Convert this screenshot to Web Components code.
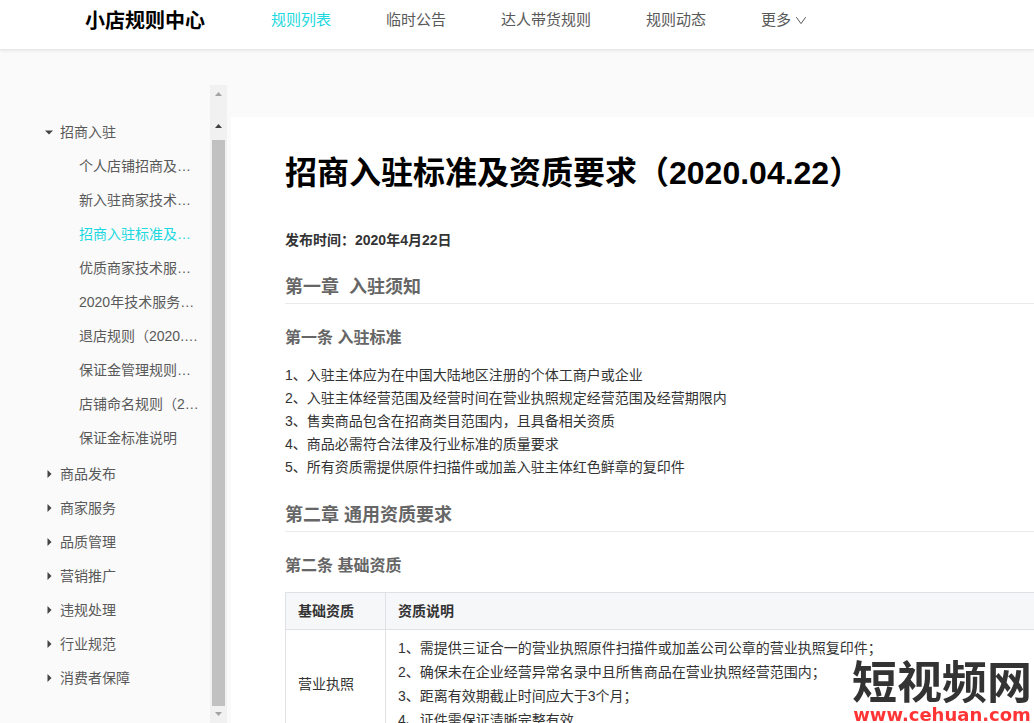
<!DOCTYPE html>
<html lang="zh-CN">
<head>
<meta charset="utf-8">
<meta name="viewport" content="width=device-width, initial-scale=1">
<title>小店规则中心</title>
<style>
    body {
        margin: 0;
        height: 100vh;
        overflow: hidden;
        background: #fafafa;
        color: #333;
        font: 14px/24px "Liberation Sans", "Noto Sans CJK SC", sans-serif;
        --accent: #1cd8e0;
        --muted: #595959;
        --line: #dfe1e4;
    }
</style>
</head>
<body>
<rule-app>
    <top-bar slot="header" heading="小店规则中心">
        <top-link active>规则列表</top-link>
        <top-link>临时公告</top-link>
        <top-link>达人带货规则</top-link>
        <top-link>规则动态</top-link>
        <top-link more>更多</top-link>
    </top-bar>

    <side-menu slot="side">
        <menu-group label="招商入驻" open>
            <menu-item>个人店铺招商及…</menu-item>
            <menu-item>新入驻商家技术…</menu-item>
            <menu-item active>招商入驻标准及…</menu-item>
            <menu-item>优质商家技术服…</menu-item>
            <menu-item>2020年技术服务…</menu-item>
            <menu-item>退店规则（2020.…</menu-item>
            <menu-item>保证金管理规则…</menu-item>
            <menu-item>店铺命名规则（2…</menu-item>
            <menu-item>保证金标准说明</menu-item>
        </menu-group>
        <menu-group label="商品发布"></menu-group>
        <menu-group label="商家服务"></menu-group>
        <menu-group label="品质管理"></menu-group>
        <menu-group label="营销推广"></menu-group>
        <menu-group label="违规处理"></menu-group>
        <menu-group label="行业规范"></menu-group>
        <menu-group label="消费者保障"></menu-group>
    </side-menu>
    <scroll-rail slot="side"></scroll-rail>

    <rule-article heading="招商入驻标准及资质要求（2020.04.22）" published="发布时间：2020年4月22日">
        <rule-chapter heading="第一章&nbsp; 入驻须知">
            <rule-section heading="第一条 入驻标准">
                <rule-line>1、入驻主体应为在中国大陆地区注册的个体工商户或企业</rule-line>
                <rule-line>2、入驻主体经营范围及经营时间在营业执照规定经营范围及经营期限内</rule-line>
                <rule-line>3、售卖商品包含在招商类目范围内，且具备相关资质</rule-line>
                <rule-line>4、商品必需符合法律及行业标准的质量要求</rule-line>
                <rule-line>5、所有资质需提供原件扫描件或加盖入驻主体红色鲜章的复印件</rule-line>
            </rule-section>
        </rule-chapter>
        <rule-chapter heading="第二章 通用资质要求">
            <rule-section heading="第二条 基础资质">
                <license-table></license-table>
            </rule-section>
        </rule-chapter>
    </rule-article>

    <site-mark slot="mark"></site-mark>
</rule-app>

<script>
/**
 * Shared base: clones the markup of the subclass into an open shadow root.
 */
class BaseElement extends HTMLElement {
    constructor() {
        super();

        const template = document.createElement("template");
        template.innerHTML = this.constructor.markup;

        this.attachShadow({mode: "open"});
        this.shadowRoot.appendChild(template.content.cloneNode(true));
    }

    /**
     * Copies an attribute of the host into a node of the shadow root.
     *
     * @param {String} selector the node that receives the text
     * @param {String} name the name of the attribute
     */
    fill(selector, name) {
        this.shadowRoot.querySelector(selector).textContent =
            this.getAttribute(name) || "";
    }
}

class RuleApp extends BaseElement {
    static get markup() {
        return `
            <style>
                :host {
                    display: flex;
                    flex-direction: column;
                    height: 100vh;
                }

                .body {
                    flex: 1;
                    display: flex;
                    min-height: 0;
                }

                aside {
                    display: flex;
                    flex: none;
                    margin-right: 4px;
                }

                main {
                    flex: 1;
                    min-width: 0;
                    margin-top: 67px;
                    background: #fff;
                    overflow: hidden;
                }
            </style>
            <slot name="header"></slot>
            <div class="body">
                <aside><slot name="side"></slot></aside>
                <main><slot></slot></main>
            </div>
            <slot name="mark"></slot>
        `;
    }
}

class TopBar extends BaseElement {
    static get markup() {
        return `
            <style>
                :host {
                    display: block;
                    position: relative;
                    background: #fff;
                    border-bottom: 1px solid #e8e8e8;
                    box-shadow: 0 1px 3px rgba(0, 0, 0, .08);
                }

                header {
                    display: flex;
                    align-items: flex-start;
                    gap: 66px;
                    padding: 0 85px 7px;
                    line-height: 40px;
                    white-space: nowrap;
                }

                strong {
                    color: #000;
                    font-size: 20px;
                    line-height: 42px;
                }

                nav {
                    display: flex;
                    gap: 55px;
                }
            </style>
            <header>
                <strong></strong>
                <nav><slot></slot></nav>
            </header>
        `;
    }

    connectedCallback() {
        this.fill("strong", "heading");
    }
}

class TopLink extends BaseElement {
    static get markup() {
        return `
            <style>
                :host {
                    display: block;
                    color: var(--muted);
                    font-size: 15px;
                }

                :host([active]) {
                    color: var(--accent);
                }

                a {
                    display: flex;
                    align-items: center;
                    gap: 4px;
                    color: inherit;
                    text-decoration: none;
                }

                svg {
                    display: none;
                }

                :host([more]) svg {
                    display: block;
                }
            </style>
            <a href="#">
                <slot></slot>
                <svg width="12" height="12" viewBox="0 0 12 12" fill="none" stroke="currentColor" aria-hidden="true">
                    <path d="M1.300 3.200 6 9.600l4.700-6.400"/>
                </svg>
            </a>
        `;
    }
}

class SideMenu extends BaseElement {
    static get markup() {
        return `
            <style>
                :host {
                    display: block;
                    box-sizing: border-box;
                    width: 210px;
                    padding: 65px 0 0 45px;
                    color: var(--muted);
                    line-height: 34px;
                }
            </style>
            <nav><slot></slot></nav>
        `;
    }
}

class MenuGroup extends BaseElement {
    static get markup() {
        return `
            <style>
                :host {
                    display: block;
                }

                button {
                    display: flex;
                    align-items: center;
                    gap: 7px;
                    width: 100%;
                    padding: 0;
                    border: 0;
                    background: none;
                    color: inherit;
                    font: inherit;
                    cursor: pointer;
                }

                :host([open]) svg {
                    transform: rotate(90deg);
                }

                .items {
                    display: none;
                    padding: 0 0 2px 34px;
                }

                :host([open]) .items {
                    display: block;
                }
            </style>
            <button type="button">
                <svg width="8" height="8" viewBox="0 0 8 8" fill="#444" aria-hidden="true">
                    <path d="M2.500 0 6.500 4l-4 4z"/>
                </svg>
                <span></span>
            </button>
            <div class="items"><slot></slot></div>
        `;
    }

    connectedCallback() {
        this.fill("span", "label");
        this.shadowRoot.querySelector("button").addEventListener("click", () => {
            this.toggleAttribute("open");
        });
    }
}

class MenuItem extends BaseElement {
    static get markup() {
        return `
            <style>
                :host {
                    display: block;
                }

                :host([active]) {
                    color: var(--accent);
                }

                a {
                    display: block;
                    color: inherit;
                    text-decoration: none;
                    white-space: nowrap;
                }
            </style>
            <a href="#"><slot></slot></a>
        `;
    }
}

class ScrollRail extends BaseElement {
    static get markup() {
        return `
            <style>
                :host {
                    display: flex;
                    flex-direction: column;
                    align-items: center;
                    box-sizing: border-box;
                    width: 17px;
                    margin-top: 35px;
                    padding: 7px 0;
                    background: #f1f1f1;
                }

                svg {
                    flex: none;
                    fill: #a3a3a3;
                }

                .step {
                    margin: 28px 0 12px;
                    fill: #404040;
                }

                .thumb {
                    flex: 1;
                    width: 13px;
                    margin-bottom: 6px;
                    background: #c1c1c1;
                }
            </style>
            <svg width="7" height="4" viewBox="0 0 7 4"><path d="M0 4 3.500 0 7 4z"/></svg>
            <svg class="step" width="7" height="4" viewBox="0 0 7 4"><path d="M0 4 3.500 0 7 4z"/></svg>
            <div class="thumb"></div>
            <svg width="7" height="4" viewBox="0 0 7 4"><path d="M0 0h7L3.500 4z"/></svg>
        `;
    }
}

class RuleArticle extends BaseElement {
    static get markup() {
        return `
            <style>
                :host {
                    display: block;
                    padding: 32px 0 0 54px;
                }

                h1 {
                    margin: 0 0 31px;
                    color: #000;
                    font-size: 32px;
                    line-height: 48px;
                }

                p {
                    margin: 0 0 20px;
                    font-weight: bold;
                }
            </style>
            <article>
                <h1></h1>
                <p></p>
                <slot></slot>
            </article>
        `;
    }

    connectedCallback() {
        this.fill("h1", "heading");
        this.fill("p", "published");
    }
}

class RuleChapter extends BaseElement {
    static get markup() {
        return `
            <style>
                :host {
                    display: block;
                    margin-bottom: 21px;
                }

                h2 {
                    margin: 0 0 21px;
                    padding-bottom: 1px;
                    border-bottom: 1px solid #eaeaea;
                    color: #666;
                    font-size: 18px;
                    line-height: 30px;
                }
            </style>
            <h2></h2>
            <slot></slot>
        `;
    }

    connectedCallback() {
        this.fill("h2", "heading");
    }
}

class RuleSection extends BaseElement {
    static get markup() {
        return `
            <style>
                :host {
                    display: block;
                }

                h3 {
                    margin: 0 0 13px;
                    color: #666;
                    font-size: 16px;
                    line-height: 26px;
                }
            </style>
            <h3></h3>
            <slot></slot>
        `;
    }

    connectedCallback() {
        this.fill("h3", "heading");
    }
}

class RuleLine extends BaseElement {
    static get markup() {
        return `
            <style>
                :host {
                    display: block;
                    line-height: 23px;
                }
            </style>
            <slot></slot>
        `;
    }
}

class LicenseTable extends BaseElement {
    static get markup() {
        return `
            <style>
                :host {
                    display: block;
                }

                table {
                    width: 100%;
                    border-collapse: collapse;
                }

                th, td {
                    padding: 6px 12px;
                    border: 1px solid var(--line);
                    text-align: left;
                }

                th:first-child {
                    width: 75px;
                }

                th:last-child, td:last-child {
                    border-right: 0;
                }

                thead {
                    background: #f6f7f9;
                }

                p {
                    margin: 0;
                }
            </style>
            <table>
                <thead>
                    <tr><th>基础资质</th><th>资质说明</th></tr>
                </thead>
                <tbody>
                    <tr>
                        <td>营业执照</td>
                        <td>
                            <p>1、需提供三证合一的营业执照原件扫描件或加盖公司公章的营业执照复印件；</p>
                            <p>2、确保未在企业经营异常名录中且所售商品在营业执照经营范围内；</p>
                            <p>3、距离有效期截止时间应大于3个月；</p>
                            <p>4、证件需保证清晰完整有效</p>
                        </td>
                    </tr>
                </tbody>
            </table>
        `;
    }
}

class SiteMark extends BaseElement {
    static get markup() {
        return `
            <style>
                :host {
                    position: fixed;
                    right: 2px;
                    bottom: 0;
                    display: flex;
                    flex-direction: column;
                    align-items: center;
                    font-weight: bold;
                    white-space: nowrap;
                    pointer-events: none;
                }

                .name {
                    font-size: 45px;
                    line-height: 46px;
                }

                .url {
                    color: #ff3535;
                    font-family: "DejaVu Sans", sans-serif;
                    font-size: 18px;
                    line-height: 16px;
                }
            </style>
            <span class="name">短视频网</span>
            <span class="url">www.cehuan.com</span>
        `;
    }
}

customElements.define("rule-app", RuleApp);
customElements.define("top-bar", TopBar);
customElements.define("top-link", TopLink);
customElements.define("side-menu", SideMenu);
customElements.define("menu-group", MenuGroup);
customElements.define("menu-item", MenuItem);
customElements.define("scroll-rail", ScrollRail);
customElements.define("rule-article", RuleArticle);
customElements.define("rule-chapter", RuleChapter);
customElements.define("rule-section", RuleSection);
customElements.define("rule-line", RuleLine);
customElements.define("license-table", LicenseTable);
customElements.define("site-mark", SiteMark);
</script>
</body>
</html>
